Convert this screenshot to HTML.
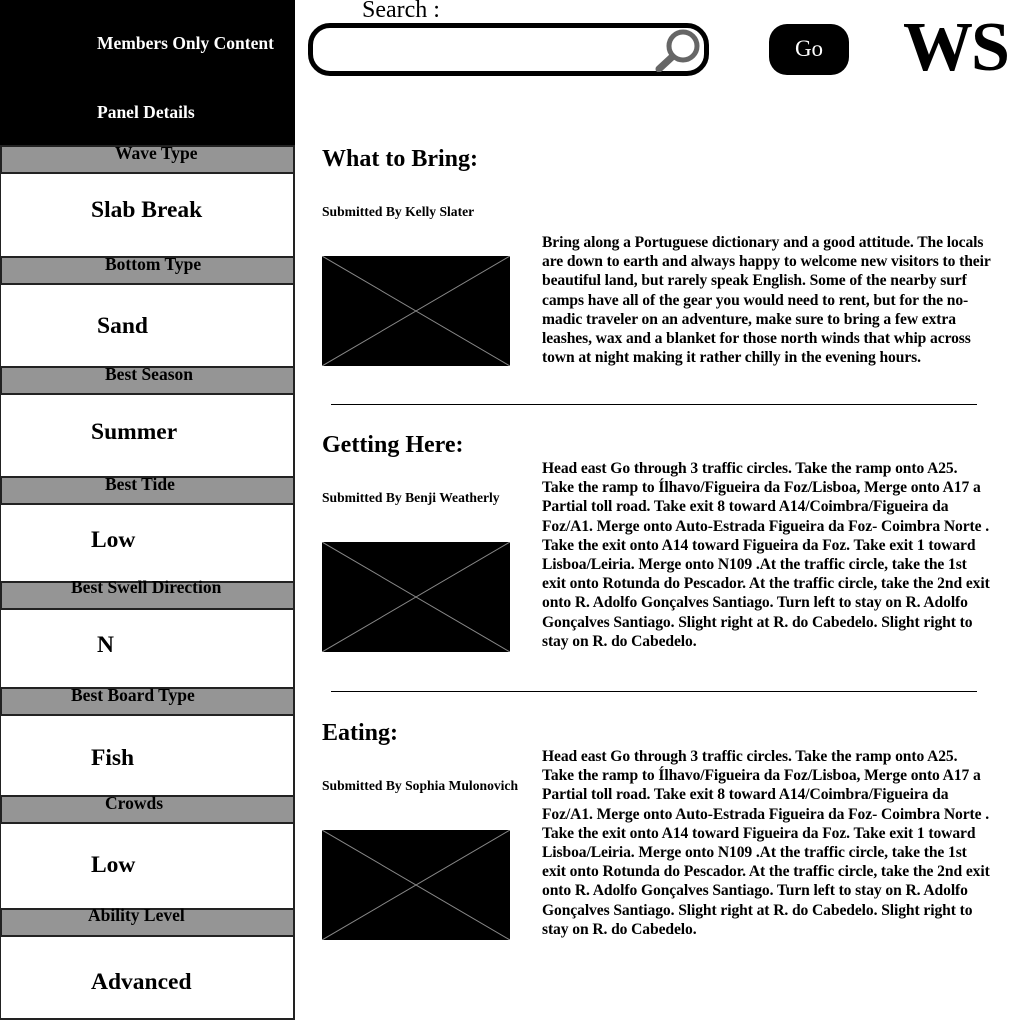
<!DOCTYPE html>
<html><head><meta charset="utf-8"><style>
*{margin:0;padding:0;box-sizing:border-box}
body{width:1020px;height:1020px;position:relative;background:#fff;font-family:"Liberation Serif",serif;font-weight:bold;color:#000;overflow:hidden}
.a{position:absolute;white-space:nowrap}
.side{position:absolute;left:0;top:0;width:295px;height:145px;background:#000}
.g{position:absolute;left:0;width:295px;background:#959595;border:2px solid #222;}
.w{position:absolute;left:0;width:295px;background:#fff;border-right:2px solid #222;border-left:1px solid #222}
.lab{position:absolute;font-size:17.5px;white-space:nowrap}
.val{position:absolute;font-size:23.5px;white-space:nowrap}
.img{position:absolute;left:322px;width:188px;height:110px;background:#000}
.p{position:absolute;left:542px;font-size:15.6px;line-height:19.2px;white-space:nowrap;letter-spacing:-0.1px}
.h{position:absolute;left:322px;font-size:24px}
.s{position:absolute;left:322px;font-size:13.6px;letter-spacing:0}
.hr{position:absolute;left:331px;width:646px;height:1px;background:#000}
</style></head><body>
<div class="side"></div>
<div class="a" style="left:97px;top:33px;color:#fff;font-size:17.5px">Members Only Content</div>
<div class="a" style="left:97px;top:102px;color:#fff;font-size:17.5px">Panel Details</div>

<div class="g" style="top:145px;height:29px"></div><div class="w" style="top:174px;height:82px"></div>
<div class="lab" style="left:115px;top:143px">Wave Type</div><div class="val" style="left:91px;top:197px">Slab Break</div>
<div class="g" style="top:256px;height:29px"></div><div class="w" style="top:285px;height:81px"></div>
<div class="lab" style="left:105px;top:254px">Bottom Type</div><div class="val" style="left:97px;top:313px">Sand</div>
<div class="g" style="top:366px;height:29px"></div><div class="w" style="top:395px;height:81px"></div>
<div class="lab" style="left:105px;top:364px">Best Season</div><div class="val" style="left:91px;top:419px">Summer</div>
<div class="g" style="top:476px;height:29px"></div><div class="w" style="top:505px;height:76px"></div>
<div class="lab" style="left:105px;top:474px">Best Tide</div><div class="val" style="left:91px;top:527px">Low</div>
<div class="g" style="top:581px;height:29px"></div><div class="w" style="top:610px;height:77px"></div>
<div class="lab" style="left:71px;top:577px">Best Swell Direction</div><div class="val" style="left:97px;top:632px">N</div>
<div class="g" style="top:687px;height:29px"></div><div class="w" style="top:716px;height:79px"></div>
<div class="lab" style="left:71px;top:685px">Best Board Type</div><div class="val" style="left:91px;top:745px">Fish</div>
<div class="g" style="top:795px;height:29px"></div><div class="w" style="top:824px;height:84px"></div>
<div class="lab" style="left:105px;top:793px">Crowds</div><div class="val" style="left:91px;top:852px">Low</div>
<div class="g" style="top:908px;height:29px"></div><div class="w" style="top:937px;height:83px;border-bottom:2px solid #222"></div>
<div class="lab" style="left:88px;top:905px">Ability Level</div><div class="val" style="left:91px;top:969px">Advanced</div>

<div class="a" style="left:362px;top:-3px;font-size:24px;font-weight:normal">Search :</div>
<div class="a" style="left:308px;top:23px;width:401px;height:53px;border:5px solid #000;border-radius:22px"></div>
<svg class="a" style="left:652px;top:26px" width="52" height="46" viewBox="0 0 52 46"><circle cx="31" cy="20" r="14" fill="none" stroke="#666" stroke-width="5"/><line x1="20" y1="31" x2="7" y2="43" stroke="#666" stroke-width="7" stroke-linecap="round"/></svg>
<div class="a" style="left:769px;top:24px;width:80px;height:51px;background:#000;border-radius:18px;color:#fff;font-weight:normal;font-size:23px;text-align:center;line-height:50px">Go</div>
<div class="a" style="left:903px;top:8px;font-size:70px;line-height:80px;letter-spacing:-2px">WS</div>

<div class="h" style="top:146px">What to Bring:</div>
<div class="s" style="top:204px">Submitted By Kelly Slater</div>
<svg class="img" style="top:256px" viewBox="0 0 188 110" preserveAspectRatio="none"><path d="M0 0L188 110M188 0L0 110" stroke="#888" stroke-width="1"/></svg>
<div class="p" style="top:233px">Bring along a Portuguese dictionary and a good attitude. The locals<br>are down to earth and always happy to welcome new visitors to their<br>beautiful land, but rarely speak English. Some of the nearby surf<br>camps have all of the gear you would need to rent, but for the no-<br>madic traveler on an adventure, make sure to bring a few extra<br>leashes, wax and a blanket for those north winds that whip across<br>town at night making it rather chilly in the evening hours.</div>
<div class="hr" style="top:404px"></div>

<div class="h" style="top:432px">Getting Here:</div>
<div class="s" style="top:490px">Submitted By Benji Weatherly</div>
<svg class="img" style="top:542px" viewBox="0 0 188 110" preserveAspectRatio="none"><path d="M0 0L188 110M188 0L0 110" stroke="#888" stroke-width="1"/></svg>
<div class="p" style="top:459px">Head east Go through 3 traffic circles. Take the ramp onto A25.<br>Take the ramp to Ílhavo/Figueira da Foz/Lisboa, Merge onto A17 a<br>Partial toll road. Take exit 8 toward A14/Coimbra/Figueira da<br>Foz/A1. Merge onto Auto-Estrada Figueira da Foz- Coimbra Norte .<br>Take the exit onto A14 toward Figueira da Foz. Take exit 1 toward<br>Lisboa/Leiria. Merge onto N109 .At the traffic circle, take the 1st<br>exit onto Rotunda do Pescador. At the traffic circle, take the 2nd exit<br>onto R. Adolfo Gonçalves Santiago. Turn left to stay on R. Adolfo<br>Gonçalves Santiago. Slight right at R. do Cabedelo. Slight right to<br>stay on R. do Cabedelo.</div>
<div class="hr" style="top:691px"></div>

<div class="h" style="top:720px">Eating:</div>
<div class="s" style="top:778px">Submitted By Sophia Mulonovich</div>
<svg class="img" style="top:830px" viewBox="0 0 188 110" preserveAspectRatio="none"><path d="M0 0L188 110M188 0L0 110" stroke="#888" stroke-width="1"/></svg>
<div class="p" style="top:747px">Head east Go through 3 traffic circles. Take the ramp onto A25.<br>Take the ramp to Ílhavo/Figueira da Foz/Lisboa, Merge onto A17 a<br>Partial toll road. Take exit 8 toward A14/Coimbra/Figueira da<br>Foz/A1. Merge onto Auto-Estrada Figueira da Foz- Coimbra Norte .<br>Take the exit onto A14 toward Figueira da Foz. Take exit 1 toward<br>Lisboa/Leiria. Merge onto N109 .At the traffic circle, take the 1st<br>exit onto Rotunda do Pescador. At the traffic circle, take the 2nd exit<br>onto R. Adolfo Gonçalves Santiago. Turn left to stay on R. Adolfo<br>Gonçalves Santiago. Slight right at R. do Cabedelo. Slight right to<br>stay on R. do Cabedelo.</div>
</body></html>
